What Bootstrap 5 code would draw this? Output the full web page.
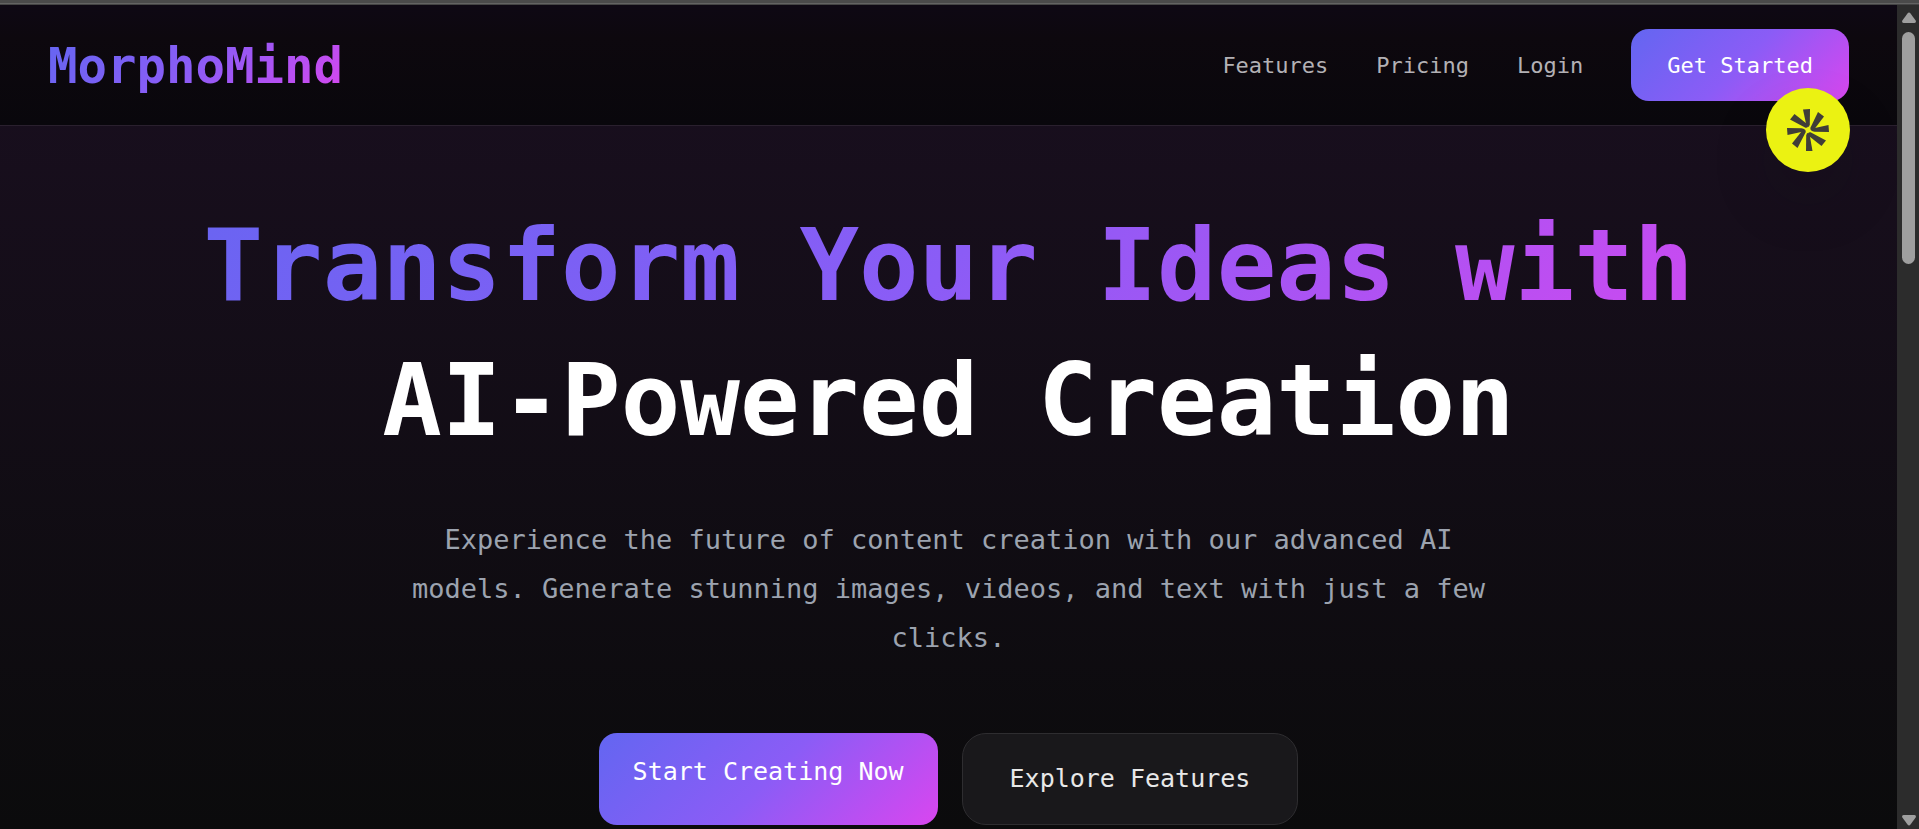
<!DOCTYPE html>
<html lang="en">
<head>
<meta charset="utf-8">
<meta name="viewport" content="width=device-width, initial-scale=1">
<title>MorphoMind</title>
<link href="https://cdn.jsdelivr.net/npm/bootstrap@5.3.0/dist/css/bootstrap.min.css" rel="stylesheet">
<style>
  :root { --brand: linear-gradient(135deg, #6366f1 0%, #8b5cf6 50%, #d946ef 100%); }
  body { font-family: "DejaVu Sans Mono", "Liberation Mono", monospace; background: #0a090c; color: #fff; }
  .window-edge { height: 5px; background: #4a4a4a; border-bottom: 1px solid #444; box-shadow: inset 0 -1px #636363; }
  .page-area { background: linear-gradient(#1a0f20, #0b0b0c); min-width: 0; }
  .site-header { background: linear-gradient(#0e0814, #0d080e 28%, #09070c); border-bottom: 1px solid #2a202e; padding: 24px 48px; }
  .brand-text { background: var(--brand); -webkit-background-clip: text; background-clip: text; color: transparent; }
  .logo { font-size: 49px; line-height: 68px; padding-top: 4px; font-weight: 700; text-decoration: none; }
  .menu { gap: 48px; font-size: 22px; line-height: 36px; }
  .menu a { color: #b3b1b5; text-decoration: none; padding-top: 2px; }
  .cta { background: var(--brand); color: #fff; border: 0; border-radius: 18px; text-align: center; }
  .menu .cta { padding: 19px 36px 17px; }
  .hero { padding: 72px 48px 0; }
  .hero h1 { font-size: 99px; line-height: 135px; font-weight: 700; margin-bottom: 47px; }
  .intro { font-size: 27px; line-height: 49px; color: #9ca3af; max-width: 1112px; margin: 0 auto 71px; }
  .actions { gap: 24px; font-size: 25px; line-height: 40px; }
  .actions .cta { padding: 19px 34px; }
  .ghost { background: #19181b; color: #e8e8e8; border: 1px solid #2e2d30; border-radius: 24px; padding: 25px 47px; }
  .assist { position: absolute; top: 83px; right: 47px; width: 84px; height: 84px; background: #ebf212; border: 0; box-shadow: 0 30px 60px rgba(20, 20, 30, .15); }
  .scroll-rail { width: 22px; background: #2c2c2c; padding: 7px 4px 3px 5px; }
  .scroll-rail svg { width: 14px; height: 12px; fill: #9f9f9f; display: block; }
  .scroll-thumb { height: 28.5%; width: 13px; background: #9f9f9f; border-radius: 7px; margin-top: 8px; }
</style>
</head>
<body class="vh-100 overflow-hidden d-flex flex-column">
<div class="window-edge flex-shrink-0"></div>
<div class="d-flex flex-grow-1 overflow-hidden">
  <div class="page-area flex-grow-1 position-relative overflow-hidden">
    <header class="site-header d-flex justify-content-between align-items-center">
      <a class="logo brand-text" href="#">MorphoMind</a>
      <nav class="menu d-flex align-items-center" aria-label="Main">
        <a href="#features">Features</a>
        <a href="#pricing">Pricing</a>
        <a href="#login">Login</a>
        <button type="button" class="cta">Get Started</button>
      </nav>
    </header>
    <main class="hero text-center">
      <h1><span class="brand-text d-block">Transform Your Ideas with</span><span class="d-block">AI-Powered Creation</span></h1>
      <p class="intro">Experience the future of content creation with our advanced AI models. Generate stunning images, videos, and text with just a few clicks.</p>
      <div class="actions d-flex justify-content-center">
        <button type="button" class="cta d-flex align-items-start">Start Creating Now</button>
        <button type="button" class="ghost">Explore Features</button>
      </div>
    </main>
    <button type="button" class="assist rounded-circle p-0 d-flex align-items-center justify-content-center" aria-label="Assistant">
      <svg width="42" height="42" viewBox="0 0 42 42" fill="#403e38" aria-hidden="true">
        <path d="M16 .5 23 0 22.800 15.500Q22 19.500 19.500 17Z"/>
        <path d="M31 3 37 7.500 27.500 20Q23.500 23.500 23.300 19Z"/>
        <path d="M41.500 16 42 23 27.500 22.800Q22.500 22 25.500 19.500Z"/>
        <path d="M39 31.500 34.500 37 22.500 27.500Q19.500 23 23.500 23.300Z"/>
        <path d="M25.500 42 19 42 19.200 26.500Q20 22.500 22.500 25Z"/>
        <path d="M10.500 39 5 34.500 14.500 22.500Q18.500 18.500 18.800 23Z"/>
        <path d="M.5 26 0 19 14.500 19.200Q19.500 20 16.500 22.500Z"/>
        <path d="M3 10.500 7.500 5 19.500 14.500Q22.500 19 18.500 18.700Z"/>
      </svg>
    </button>
  </div>
  <div class="scroll-rail d-flex flex-column flex-shrink-0" aria-hidden="true">
    <svg viewBox="0 0 14 12"><path d="M5.500 1.500Q7-.5 8.500 1.500L14 9Q14 11 12.500 11H1.500Q0 11 0 9Z"/></svg>
    <div class="scroll-thumb"></div>
    <svg class="mt-auto" viewBox="0 0 14 12"><path d="M5.500 10.500Q7 12.500 8.500 10.500L14 3Q14 1 12.500 1H1.500Q0 1 0 3Z"/></svg>
  </div>
</div>
<script src="https://cdn.jsdelivr.net/npm/bootstrap@5.3.0/dist/js/bootstrap.bundle.min.js"></script>
</body>
</html>
